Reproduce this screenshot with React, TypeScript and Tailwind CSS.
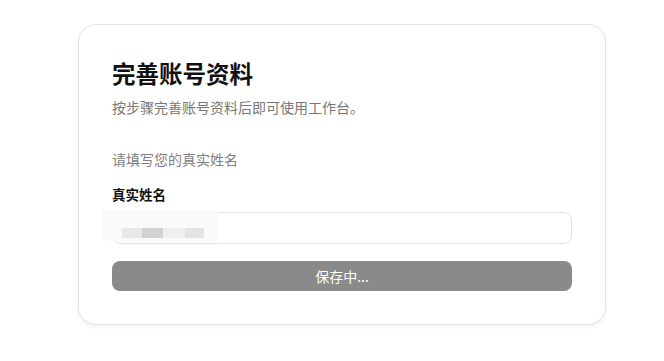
const App = () => {
  return (
    <div
      className="min-h-[361px] w-full bg-white pl-[78px] pt-[24px]"
      style={{ fontFamily: '"Noto Sans CJK SC", "Noto Sans", sans-serif' }}
    >
      {/*Profile Card*/}
      <div className="relative w-[528px] rounded-[18px] border border-[#e3e3e3] bg-white p-[33px] shadow-[0_2px_4px_rgba(0,0,0,0.06)]">
        <h1 className="text-[23.5px] leading-[30px] font-bold text-[#111]">完善账号资料</h1>
        <p className="mt-[9px] text-[14px] leading-[20px] text-[#777]">
          按步骤完善账号资料后即可使用工作台。
        </p>

        <p className="mt-[32px] text-[14px] leading-[20px] text-[#808080]">请填写您的真实姓名</p>

        {/*Name Field*/}
        <label className="mt-[15px] block text-[13.5px] leading-[20px] font-bold text-[#111]">真实姓名</label>
        <div className="relative mt-[8px]">
          <input
            type="text"
            className="h-[32px] w-full rounded-[8px] border border-[#e2e2e2] bg-white px-3 text-[14px] outline-none"
          />
          {/*Autofill overlay*/}
          <div className="absolute left-[-10px] top-[-2px] h-[31px] w-[116px] bg-[#fafafa]">
            <div className="absolute left-[20px] top-[18px] flex h-[10px]">
              <div className="w-[20px] bg-[#e8e8e8]" />
              <div className="w-[21px] bg-[#d2d2d2]" />
              <div className="w-[22px] bg-[#efefef]" />
              <div className="w-[19px] bg-[#e4e4e4]" />
            </div>
          </div>
        </div>

        {/*Save Button*/}
        <button
          type="button"
          disabled
          className="mt-[17px] flex h-[30px] w-full items-center justify-center rounded-[8px] bg-[#8a8a8a] text-[14px] text-white"
        >
          保存中...
        </button>
      </div>
    </div>
  );
};

export default App;
